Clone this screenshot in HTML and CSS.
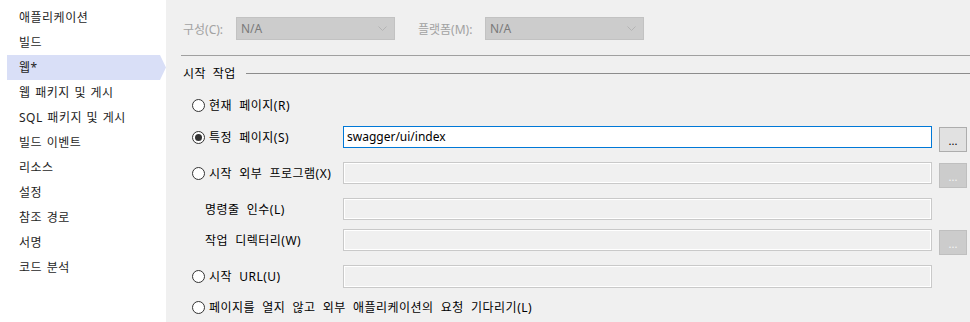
FILE: index.html
```html
<!DOCTYPE html>
<html lang="ko">
<head>
    <meta charset="UTF-8">
    <title>웹 속성</title>
    <link rel="stylesheet" href="styles.css">
</head>
<body>
    <div class="window">
        <ul class="nav">
            <li>애플리케이션</li>
            <li>빌드</li>
            <li class="active">웹*</li>
            <li>웹 패키지 및 게시</li>
            <li>SQL 패키지 및 게시</li>
            <li>빌드 이벤트</li>
            <li>리소스</li>
            <li>설정</li>
            <li>참조 경로</li>
            <li>서명</li>
            <li>코드 분석</li>
        </ul>

        <div class="panel">
            <div class="toolbar">
                <span class="field-label config-label">구성(C):</span>
                <div class="combo">
                    <span>N/A</span>
                    <svg width="9" height="5" viewBox="0 0 9 5"><path d="M0.5 0.5 L4.5 4.5 L8.5 0.5" fill="none" stroke="#b4b4b4" stroke-width="1"/></svg>
                </div>
                <span class="field-label platform-label">플랫폼(M):</span>
                <div class="combo">
                    <span>N/A</span>
                    <svg width="9" height="5" viewBox="0 0 9 5"><path d="M0.5 0.5 L4.5 4.5 L8.5 0.5" fill="none" stroke="#b4b4b4" stroke-width="1"/></svg>
                </div>
            </div>

            <div class="separator"></div>

            <div class="group-title">
                <span>시작 작업</span>
                <div class="group-line"></div>
            </div>

            <div class="options">
                <div class="row row-current">
                    <label class="opt"><span class="radio"></span>현재 페이지(R)</label>
                </div>
                <div class="row row-specific">
                    <label class="opt"><span class="radio checked"></span>특정 페이지(S)</label>
                    <div class="input active">swagger/ui/index</div>
                    <div class="btn">...</div>
                </div>
                <div class="row row-program">
                    <label class="opt"><span class="radio"></span>시작 외부 프로그램(X)</label>
                    <div class="input"></div>
                    <div class="btn disabled">...</div>
                </div>
                <div class="row row-args">
                    <label class="opt sub">명령줄 인수(L)</label>
                    <div class="input"></div>
                </div>
                <div class="row row-dir">
                    <label class="opt sub">작업 디렉터리(W)</label>
                    <div class="input"></div>
                    <div class="btn disabled">...</div>
                </div>
                <div class="row row-url">
                    <label class="opt"><span class="radio"></span>시작 URL(U)</label>
                    <div class="input tall"></div>
                </div>
                <div class="row row-wait">
                    <label class="opt wide"><span class="radio"></span>페이지를 열지 않고 외부 애플리케이션의 요청 기다리기(L)</label>
                </div>
            </div>
        </div>
    </div>
</body>
</html>
```

FILE: styles.css
```css
body {
    margin: 0;
    font-family: "Noto Sans", "Noto Sans CJK KR", sans-serif;
    font-size: 12px;
    color: #1e1e1e;
    background-color: #f0f0f0;
}
.window {
    display: flex;
    width: 970px;
    height: 322px;
    overflow: hidden;
}

/* left navigation */
.nav {
    list-style: none;
    margin: 0;
    padding: 5px 0 0 0;
    width: 166px;
    flex: none;
    background-color: #ffffff;
    letter-spacing: 0.5px;
    word-spacing: 1px;
}
.nav li {
    height: 25px;
    line-height: 25px;
    padding-left: 12px;
    margin-left: 7px;
    width: 147px;
}
.nav li.active {
    background-color: #d9dff7;
    clip-path: polygon(0 0, 153px 0, 159px 50%, 153px 100%, 0 100%);
}

/* right panel */
.panel {
    flex: 1;
    background-color: #f0f0f0;
}
.toolbar {
    display: flex;
    align-items: center;
    padding: 17px 0 0 17px;
    height: 23px;
}
.field-label {
    color: #a2a2a2;
}
.config-label {
    width: 53px;
}
.platform-label {
    width: 67px;
    margin-left: 23px;
}
.combo {
    display: flex;
    align-items: center;
    justify-content: space-between;
    box-sizing: border-box;
    width: 159px;
    height: 23px;
    padding: 0 7px 0 4px;
    background-color: #cccccc;
    border: 1px solid #c2c2c2;
    color: #7a7a7a;
}
.separator {
    height: 1px;
    margin: 15px 0 0 15px;
    background-color: #a0a0a0;
}
.group-title {
    display: flex;
    align-items: center;
    height: 18px;
    margin-top: 8px;
    padding-left: 17px;
    color: #000000;
    letter-spacing: 0.5px;
    word-spacing: 3px;
}
.group-line {
    flex: 1;
    height: 1px;
    margin-left: 10px;
    background-color: #8c8c8c;
}

/* start options */
.options {
    padding-left: 26px;
    color: #000000;
}
.row {
    display: flex;
    align-items: flex-start;
    height: 22px;
}
.row-current { margin-top: 12px; }
.row-specific { margin-top: 10px; }
.row-program { margin-top: 14px; }
.row-args { margin-top: 14px; }
.row-dir { margin-top: 9px; }
.row-url { margin-top: 14px; height: 23px; }
.row-wait { margin-top: 8px; }

.opt {
    display: flex;
    align-items: center;
    width: 151px;
    height: 22px;
    flex: none;
    white-space: nowrap;
    letter-spacing: 0.5px;
    word-spacing: 3.5px;
}
.opt.sub {
    padding-left: 13px;
    box-sizing: border-box;
}
.opt.wide {
    width: auto;
}
.radio {
    box-sizing: border-box;
    width: 13px;
    height: 13px;
    margin-right: 4px;
    border: 1px solid #333333;
    border-radius: 50%;
    background-color: #ffffff;
    display: flex;
    align-items: center;
    justify-content: center;
}
.radio.checked::before {
    content: "";
    width: 7px;
    height: 7px;
    border-radius: 50%;
    background-color: #333333;
}
.input {
    box-sizing: border-box;
    width: 589px;
    height: 22px;
    flex: none;
    border: 1px solid #c9c9c9;
    box-shadow: inset 0 0 0 1px #ffffff;
    background-color: #f0f0f0;
}
.input.tall {
    height: 23px;
}
.input.active {
    border-color: #0078d7;
    box-shadow: none;
    background-color: #ffffff;
    padding-left: 3px;
    line-height: 20px;
    color: #000000;
}
.btn {
    box-sizing: border-box;
    width: 28px;
    height: 25px;
    margin: 1px 0 0 7px;
    flex: none;
    background-color: #e1e1e1;
    border: 1px solid #adadad;
    text-align: center;
    line-height: 26px;
    font-size: 11px;
    color: #000000;
}
.btn.disabled {
    background-color: #cccccc;
    border-color: #bfbfbf;
    color: #f4f4f4;
}
```
